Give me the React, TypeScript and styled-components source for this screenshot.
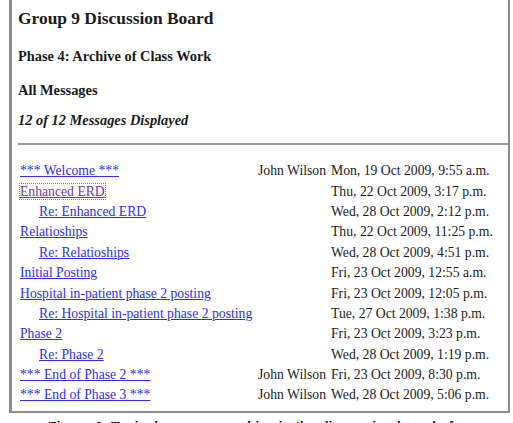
import React from "react";
import styled, { createGlobalStyle } from "styled-components";

const GlobalStyle = createGlobalStyle`
  html, body {
    margin: 0;
    padding: 0;
    background: #ffffff;
  }
  body {
    font-family: "Liberation Serif", "Times New Roman", serif;
    color: #1a1a1a;
    overflow: hidden;
  }
`;

const Page = styled.div`
  width: 513px;
  height: 423px;
  overflow: hidden;
`;

const Board = styled.div`
  margin-left: 9px;
  width: 496px;
  border: 3px solid #8c8c8c;
  border-top: none;
  border-right-width: 2px;
  border-bottom-width: 2px;
  background: #fff;
`;

const Header = styled.div`
  padding: 6px 0 0 6px;
`;

const Title = styled.h1`
  margin: 0;
  font-size: 17.4px;
  font-weight: bold;
  line-height: 24px;
`;

const Subtitle = styled.h2`
  margin: 17px 0 0;
  font-size: 14.4px;
  font-weight: bold;
  line-height: 18px;
`;

const ListHeading = styled.h3`
  margin: 16px 0 0;
  font-size: 14.4px;
  font-weight: bold;
  line-height: 18px;
`;

const Count = styled.p`
  margin: 12px 0 0;
  font-size: 14.4px;
  font-weight: bold;
  font-style: italic;
  line-height: 18px;
`;

const Rule = styled.hr`
  margin: 14px 0 0 6px;
  border: none;
  border-top: 2px solid #9a9a9a;
  height: 0;
`;

const Messages = styled.div`
  margin: 16px 0 5px 8px;
  font-size: 13.7px;
`;

const Row = styled.div`
  display: grid;
  grid-template-columns: 238px 73px 1fr;
  align-items: center;
  height: 20.4px;
  white-space: nowrap;
`;

const Topic = styled.div<{ $reply?: boolean }>`
  padding-left: ${(p) => (p.$reply ? 19 : 0)}px;
`;

const Author = styled.div`
  padding-right: 5px;
  text-align: right;
`;

const Posted = styled.div``;

const TopicLink = styled.a<{ $visited?: boolean }>`
  color: ${(p) => (p.$visited ? "#6a3a9a" : "#2e2ee6")};
  text-decoration: underline;
  outline: ${(p) => (p.$visited ? "1px dotted #8a7a9a" : "none")};
`;

const Caption = styled.p`
  margin: 6px 0 0 48px;
  font-family: "Liberation Sans", Arial, sans-serif;
  font-size: 14px;
  line-height: 16px;
  font-weight: bold;
  color: #222;
  white-space: nowrap;
`;

type Message = {
  topic: string;
  reply?: boolean;
  visited?: boolean;
  author?: string;
  date: string;
};

const messages: Message[] = [
  { topic: "*** Welcome ***", author: "John Wilson", date: "Mon, 19 Oct 2009, 9:55 a.m." },
  { topic: "Enhanced ERD", visited: true, date: "Thu, 22 Oct 2009, 3:17 p.m." },
  { topic: "Re: Enhanced ERD", reply: true, date: "Wed, 28 Oct 2009, 2:12 p.m." },
  { topic: "Relatioships", date: "Thu, 22 Oct 2009, 11:25 p.m." },
  { topic: "Re: Relatioships", reply: true, date: "Wed, 28 Oct 2009, 4:51 p.m." },
  { topic: "Initial Posting", date: "Fri, 23 Oct 2009, 12:55 a.m." },
  { topic: "Hospital in-patient phase 2 posting", date: "Fri, 23 Oct 2009, 12:05 p.m." },
  { topic: "Re: Hospital in-patient phase 2 posting", reply: true, date: "Tue, 27 Oct 2009, 1:38 p.m." },
  { topic: "Phase 2", date: "Fri, 23 Oct 2009, 3:23 p.m." },
  { topic: "Re: Phase 2", reply: true, date: "Wed, 28 Oct 2009, 1:19 p.m." },
  { topic: "*** End of Phase 2 ***", author: "John Wilson", date: "Fri, 23 Oct 2009, 8:30 p.m." },
  { topic: "*** End of Phase 3 ***", author: "John Wilson", date: "Wed, 28 Oct 2009, 5:06 p.m." },
];

export default function App() {
  return (
    <Page>
      <GlobalStyle />
      <Board>
        <Header>
          <Title>Group 9 Discussion Board</Title>
          <Subtitle>Phase 4: Archive of Class Work</Subtitle>
          <ListHeading>All Messages</ListHeading>
          <Count>12 of 12 Messages Displayed</Count>
        </Header>
        <Rule />
        <Messages>
          {messages.map((m) => (
            <Row key={m.topic + m.date}>
              <Topic $reply={m.reply}>
                <TopicLink href="#" $visited={m.visited}>
                  {m.topic}
                </TopicLink>
              </Topic>
              <Author>{m.author ?? ""}</Author>
              <Posted>{m.date}</Posted>
            </Row>
          ))}
        </Messages>
      </Board>
      <Caption>Figure 6: Typical message archive in the discussion board of</Caption>
    </Page>
  );
}
